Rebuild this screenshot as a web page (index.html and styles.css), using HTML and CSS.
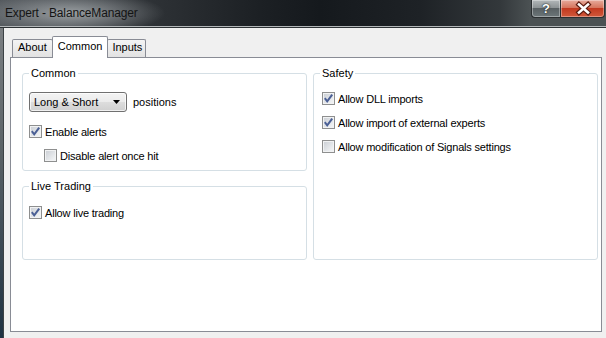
FILE: index.html
```html
<!DOCTYPE html>
<html>
<head>
  <meta charset="utf-8">
  <meta name="viewport" content="width=device-width, initial-scale=1">
  <title>Expert - BalanceManager</title>
  <link rel="stylesheet" href="styles.css">
</head>
<body>
  <div class="window">
    <div class="titlebar">
      <span class="title">Expert - BalanceManager</span>
      <div class="caption-buttons">
        <div class="cap-btn help">?</div>
        <div class="cap-btn close">
          <svg width="43" height="17" viewBox="0 0 43 17">
            <path d="M18 4.5 L27 12.5 M27 4.5 L18 12.5" stroke="#5b1b10" stroke-width="5" stroke-linecap="square"/>
            <path d="M18 4.5 L27 12.5 M27 4.5 L18 12.5" stroke="#fff" stroke-width="2.6" stroke-linecap="square"/>
          </svg>
        </div>
      </div>
    </div>

    <div class="frame">
      <div class="frame-edge"></div>
      <div class="client">
        <div class="tabs">
          <div class="tab">About</div>
          <div class="tab active">Common</div>
          <div class="tab">Inputs</div>
        </div>

        <div class="tab-panel">
          <div class="columns">
            <div class="col">
              <fieldset class="group group-common">
                <legend>Common</legend>
                <div class="row">
                  <div class="dropdown">
                    <span>Long &amp; Short</span>
                    <svg width="7" height="4" viewBox="0 0 7 4"><path d="M0 0 H7 L3.5 4 Z" fill="#000"/></svg>
                  </div>
                  <span>positions</span>
                </div>
                <label class="check first">
                  <span class="box"><svg class="tick" width="11" height="11" viewBox="0 0 11 11"><path d="M1.8 5.2 L4.2 8.3 L9.2 1.6"/></svg></span>Enable alerts
                </label>
                <label class="check indent">
                  <span class="box"></span>Disable alert once hit
                </label>
              </fieldset>

              <fieldset class="group group-live">
                <legend>Live Trading</legend>
                <label class="check">
                  <span class="box"><svg class="tick" width="11" height="11" viewBox="0 0 11 11"><path d="M1.8 5.2 L4.2 8.3 L9.2 1.6"/></svg></span>Allow live trading
                </label>
              </fieldset>
            </div>

            <fieldset class="group group-safety">
              <legend>Safety</legend>
              <label class="check">
                <span class="box"><svg class="tick" width="11" height="11" viewBox="0 0 11 11"><path d="M1.8 5.2 L4.2 8.3 L9.2 1.6"/></svg></span>Allow DLL imports
              </label>
              <label class="check">
                <span class="box"><svg class="tick" width="11" height="11" viewBox="0 0 11 11"><path d="M1.8 5.2 L4.2 8.3 L9.2 1.6"/></svg></span>Allow import of external experts
              </label>
              <label class="check">
                <span class="box"></span>Allow modification of Signals settings
              </label>
            </fieldset>
          </div>
        </div>
      </div>
    </div>
  </div>
</body>
</html>
```

FILE: styles.css
```css
body {
  margin: 0;
  background-color: #f0f0f0;
  font-family: "Liberation Sans", Arial, sans-serif;
  font-size: 11px;
  color: #000;
}
.window {
  height: 338px;
  display: flex;
  flex-direction: column;
}

/* title bar */
.titlebar {
  height: 26px;
  display: flex;
  align-items: flex-start;
  border-bottom: 1px solid #b3b7b9;
  background:
    radial-gradient(ellipse 95px 22px at 70px 13px, rgba(170,175,178,0.85), rgba(170,175,178,0) 100%),
    linear-gradient(to right, #50555a 0, #2e3236 150px, #1c2024 260px, #15191d 320px, #1e2226 420px, #33383b 500px, #4b5153 530px);
}
.title {
  padding-left: 5px;
  line-height: 26px;
  font-size: 12px;
  letter-spacing: -0.15px;
  color: #141414;
}
.caption-buttons {
  margin-left: auto;
  margin-right: 1px;
  display: flex;
}
.cap-btn {
  height: 18px;
  box-sizing: border-box;
  border: 1px solid #2a2e30;
  border-top: none;
  box-shadow: inset 0 0 0 1px rgba(255,255,255,0.35);
}
.help {
  width: 29px;
  border-right: none;
  border-radius: 0 0 0 4px;
  background: linear-gradient(#b2b7b9, #8d9395 45%, #596063 50%, #6c7679);
  color: #fff;
  font-weight: bold;
  font-size: 13px;
  line-height: 17px;
  text-align: center;
  text-shadow: 0 0 2px #1e2224, 0 0 1px #1e2224;
}
.close {
  width: 45px;
  border-radius: 0 0 4px 0;
  background: linear-gradient(#e7ab9c, #d6765e 45%, #c23a20 50%, #d1583b);
}
.close svg {
  display: block;
}

/* window body */
.frame {
  flex: 1;
  display: flex;
  border-top: 1px solid #2d3235;
}
.frame-edge {
  width: 3px;
  border-right: 1px solid #3c4245;
  background: linear-gradient(#7b7f82, #5a6266 40%, #1f3243);
}
.client {
  flex: 1;
  display: flex;
  flex-direction: column;
  padding: 8px 4px 6px 6px;
}

/* tabs */
.tabs {
  display: flex;
  align-items: flex-end;
  height: 21px;
  padding-left: 2px;
}
.tab {
  height: 18px;
  box-sizing: border-box;
  padding: 0 5px;
  margin-left: -1px;
  line-height: 15px;
  border: 1px solid #898c95;
  border-bottom: none;
  border-radius: 2px 2px 0 0;
  background: linear-gradient(#f4f4f4, #e2e2e2);
}
.tab:first-child {
  margin-left: 0;
}
.tab:last-child {
  padding: 0 3px 0 4px;
}
.tab.active {
  position: relative;
  z-index: 1;
  height: 22px;
  margin-bottom: -1px;
  padding-top: 2px;
  background: #fff;
}
.tab-panel {
  flex: 1;
  border: 1px solid #898c95;
  background-color: #fff;
  padding: 8px 3px 0 11px;
}
.columns {
  display: grid;
  grid-template-columns: 285px 285px;
  gap: 6px;
}
.col {
  display: flex;
  flex-direction: column;
  gap: 8px;
}

/* group boxes */
.group {
  margin: 0;
  min-width: 0;
  box-sizing: border-box;
  border: 1px solid #d5dfe5;
  border-radius: 3px;
  padding: 11px 6px 0;
  display: flex;
  flex-direction: column;
  gap: 11px;
}
.group legend {
  padding: 0 2px;
  line-height: 15px;
}
.group-common {
  height: 105px;
}
.group-live {
  height: 81px;
  padding-top: 12px;
}
.group-safety {
  padding-left: 8px;
}
.group-safety legend {
  margin-left: -2px;
}

.row {
  display: flex;
  align-items: center;
  gap: 6px;
  height: 20px;
}
.dropdown {
  width: 98px;
  height: 20px;
  box-sizing: border-box;
  display: flex;
  align-items: center;
  justify-content: space-between;
  padding: 0 6px 0 4px;
  border: 1px solid #707070;
  border-radius: 3px;
  background: linear-gradient(#f3f3f3, #ebebeb 50%, #dddddd 50%, #d0d0d0);
  box-shadow: inset 0 0 0 1px rgba(255,255,255,0.7);
}

/* checkboxes */
.check {
  display: flex;
  align-items: center;
  gap: 3px;
  height: 13px;
  letter-spacing: -0.2px;
}
.check.first {
  margin-top: 2px;
}
.check.indent {
  margin-left: 15px;
}
.box {
  width: 13px;
  height: 13px;
  flex: none;
  box-sizing: border-box;
  display: flex;
  align-items: center;
  justify-content: center;
  border: 1px solid #8e8f8f;
  background: linear-gradient(135deg, #c9cdd3, #eef0f2 80%);
  box-shadow: inset 0 0 0 1px #f1f2f3;
}
.tick {
  display: block;
}
.tick path {
  fill: none;
  stroke: #4a5f95;
  stroke-width: 2;
}
```
